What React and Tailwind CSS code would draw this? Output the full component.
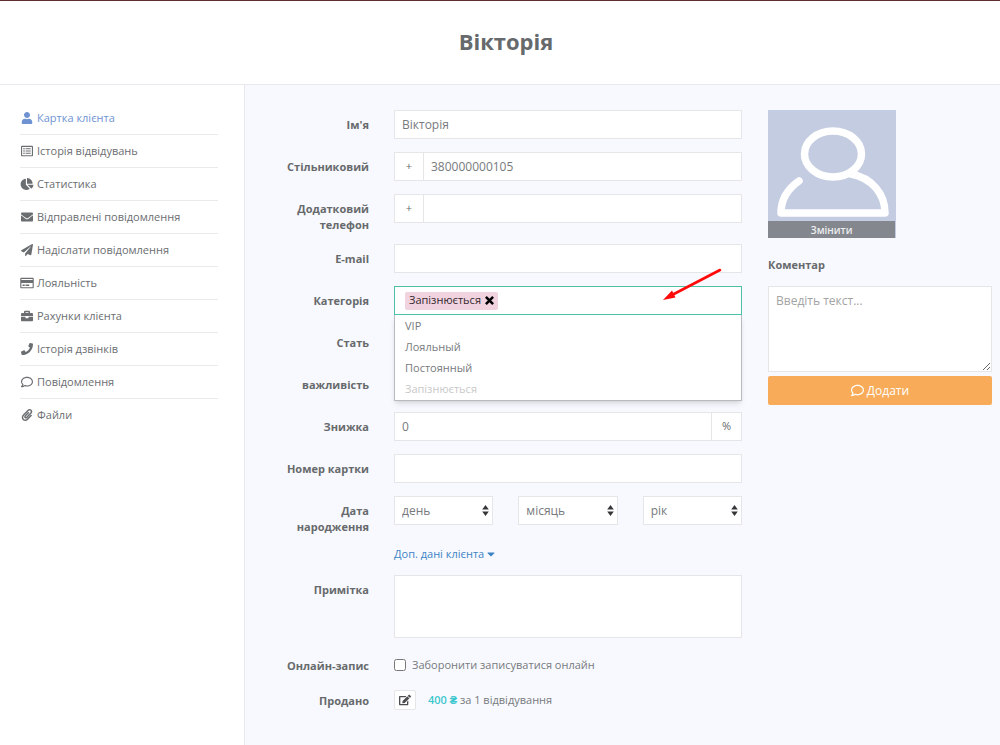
import React from "react";
import {
  FaUser,
  FaRegListAlt,
  FaChartPie,
  FaEnvelope,
  FaPaperPlane,
  FaRegCreditCard,
  FaBriefcase,
  FaPhone,
  FaRegComment,
  FaPaperclip,
  FaCaretDown,
  FaEdit,
} from "react-icons/fa";

const menu = [
  { label: "Картка клієнта", Icon: FaUser, active: true },
  { label: "Історія відвідувань", Icon: FaRegListAlt },
  { label: "Статистика", Icon: FaChartPie },
  { label: "Відправлені повідомлення", Icon: FaEnvelope },
  { label: "Надіслати повідомлення", Icon: FaPaperPlane },
  { label: "Лояльність", Icon: FaRegCreditCard },
  { label: "Рахунки клієнта", Icon: FaBriefcase },
  { label: "Історія дзвінків", Icon: FaPhone },
  { label: "Повідомлення", Icon: FaRegComment },
  { label: "Файли", Icon: FaPaperclip },
];

const box =
  "block h-[29px] w-full min-w-0 border border-[#e5e6e7] bg-white px-[7px] text-[12px] text-[#777a7d] outline-none";

function Sidebar() {
  return (
    <nav className="w-[245px] shrink-0 border-r border-[#e7e9ee] bg-white pt-[17px] pr-[26px] pl-5">
      <ul>
        {menu.map(({ label, Icon, active }) => (
          <li key={label} className="border-b border-[#e9eaeb] last:border-b-0">
            <a
              href="#"
              className={
                active
                  ? "flex h-8 items-center gap-[3px] text-[11px] text-[#6f93d2]"
                  : "flex h-8 items-center gap-[3px] text-[11px] text-[#6b6e71]"
              }
            >
              <Icon className="h-3 w-3.5 shrink-0" />
              {label}
            </a>
          </li>
        ))}
      </ul>
    </nav>
  );
}

function Row({ label, id, children }) {
  return (
    <div className="flex gap-[25px]">
      <label
        htmlFor={id}
        className="-mb-0.5 w-[94px] shrink-0 pt-[7px] text-right text-[11px] leading-4 font-bold text-[#676a6c]"
      >
        {label}
      </label>
      <div className="min-w-0 flex-1">{children}</div>
    </div>
  );
}

function PhoneInput({ id, value }) {
  return (
    <div className="flex">
      <span className="flex h-[29px] w-[29px] shrink-0 items-center justify-center border border-r-0 border-[#e5e6e7] bg-white text-[11px] text-[#676a6c]">
        +
      </span>
      <input id={id} type="tel" defaultValue={value} className={box} />
    </div>
  );
}

function DateSelect({ id, label }) {
  return (
    <div className="relative">
      <select id={id} aria-label={label} className={`${box} appearance-none`}>
        <option>{label}</option>
      </select>
      <svg
        viewBox="0 0 6 10"
        className="pointer-events-none absolute top-[9px] right-1 h-[11px] w-[7px]"
        fill="#343638"
      >
        <path d="M3 0 6 4H0zM3 10 0 6h6z" />
      </svg>
    </div>
  );
}

function Category() {
  return (
    <div className="relative">
      <div className="flex h-[29px] items-center border border-[#4fc0a8] bg-white px-2.5">
        <span className="flex h-[18px] items-center gap-1 rounded-xs bg-[#f1d3e0] px-1 text-[11px] text-[#33292e]">
          Запізнюється
          <button type="button" aria-label="Прибрати" className="flex">
            <svg viewBox="0 0 10 10" className="h-[9px] w-[9px]" stroke="#000" strokeWidth="2.8">
              <path d="M1 1l8 8M9 1L1 9" />
            </svg>
          </button>
        </span>
        <input id="category" className="h-full min-w-0 flex-1 outline-none" />
      </div>
      <ul
        role="listbox"
        aria-label="Категорія"
        className="absolute inset-x-0 top-[29px] z-10 border border-t-0 border-[#b9babd] bg-white text-[11px] text-[#777a7d] shadow-md"
      >
        <li role="option" className="h-[21px] px-2.5 leading-[21px]">VIP</li>
        <li role="option" className="h-[21px] px-2.5 leading-[21px]">Лояльный</li>
        <li role="option" className="h-[21px] px-2.5 leading-[21px]">Постоянный</li>
        <li role="option" aria-disabled="true" className="h-[22px] px-2.5 leading-[22px] text-[#c9c9c9]">
          Запізнюється
        </li>
      </ul>
      <svg
        viewBox="0 0 60 33"
        className="pointer-events-none absolute -top-[18px] right-5 z-20 h-[33px] w-[60px]"
      >
        <path d="M58 2 10 27" stroke="#fe0a0a" strokeWidth="2.6" strokeLinecap="round" />
        <path d="M1 32 10 22.500 13.500 29.500z" fill="#fe0a0a" />
      </svg>
    </div>
  );
}

function ClientForm() {
  return (
    <form className="flex min-w-0 flex-1 flex-col gap-[13px]">
      <Row label="Ім'я" id="name">
        <input id="name" defaultValue="Вікторія" className={box} />
      </Row>
      <Row label="Стільниковий" id="phone">
        <PhoneInput id="phone" value="380000000105" />
      </Row>
      <Row label="Додатковий телефон" id="phone2">
        <PhoneInput id="phone2" value="" />
      </Row>
      <Row label="E-mail" id="email">
        <input id="email" type="email" className={box} />
      </Row>
      <Row label="Категорія" id="category">
        <Category />
      </Row>
      <Row label="Стать" id="gender">
        <select id="gender" className={`${box} appearance-none`} />
      </Row>
      <Row label="важливість" id="importance">
        <select id="importance" className={`${box} appearance-none`} />
      </Row>
      <Row label="Знижка" id="discount">
        <div className="flex">
          <input id="discount" defaultValue="0" className={box} />
          <span className="flex h-[29px] w-[30px] shrink-0 items-center justify-center border border-l-0 border-[#e5e6e7] bg-white text-[11px] text-[#676a6c]">
            %
          </span>
        </div>
      </Row>
      <Row label="Номер картки" id="card">
        <input id="card" className={box} />
      </Row>
      <Row label="Дата народження" id="day">
        <div className="grid grid-cols-3 gap-[25px]">
          <DateSelect id="day" label="день" />
          <DateSelect id="month" label="місяць" />
          <DateSelect id="year" label="рік" />
        </div>
      </Row>
      <div className="flex pl-[119px]">
        <a href="#" className="flex items-center gap-0.5 text-[11px] leading-4 text-[#3c84c4]">
          Доп. дані клієнта
          <FaCaretDown className="h-3 w-2.5" />
        </a>
      </div>
      <Row label="Примітка" id="note">
        <textarea
          id="note"
          className="block h-[63px] w-full resize-none border border-[#e5e6e7] bg-white p-[7px] text-[12px] outline-none"
        />
      </Row>
      <Row label="Онлайн-запис" id="online">
        <label className="flex items-center gap-1.5 pt-[6px] text-[11px] leading-4 text-[#777a7d]">
          <input id="online" type="checkbox" className="h-3 w-3 shrink-0" />
          Заборонити записуватися онлайн
        </label>
      </Row>
      <Row label="Продано" id="edit-sales">
        <div className="flex items-center gap-3 pt-1 text-[11px] leading-5 text-[#777a7d]">
          <button
            id="edit-sales"
            type="button"
            aria-label="Редагувати"
            className="flex h-5 w-[22px] items-center justify-center rounded-xs border border-[#e5e6e7] bg-white text-[#4b4d50]"
          >
            <FaEdit className="h-3 w-3" />
          </button>
          <span>
            <span className="font-semibold text-[#3cc7cf]">400 ₴</span> за 1 відвідування
          </span>
        </div>
      </Row>
    </form>
  );
}

function Aside() {
  return (
    <aside className="w-[224px] shrink-0">
      <div className="relative h-32 w-32 bg-[#c4cce1]">
        <svg viewBox="0 0 128 128" className="h-32 w-32" fill="none" stroke="#fff" strokeWidth="7.500">
          <ellipse cx="65" cy="44" rx="28.500" ry="23" />
          <path
            d="M31 71C18 80 13 91 13 103H117C117 84 104 68 83 64"
            strokeLinecap="round"
            strokeLinejoin="round"
          />
        </svg>
        <button
          type="button"
          className="absolute bottom-0 left-0 h-[17px] w-[127px] bg-[#84878e] text-[10px] leading-4 font-semibold text-[#eceef0]"
        >
          Змінити
        </button>
      </div>
      <label htmlFor="comment" className="mt-[19px] block text-[11px] leading-4 font-bold text-[#676a6c]">
        Коментар
      </label>
      <textarea
        id="comment"
        placeholder="Введіть текст..."
        className="mt-[13px] block h-[86px] w-full border border-[#e5e6e7] bg-white px-[7px] py-[5px] text-[12px] outline-none placeholder:text-[#a3a3a3]"
      />
      <button
        type="button"
        className="mt-1 flex h-[29px] w-full items-center justify-center gap-[3px] rounded-xs bg-[#f8ac59] text-[12px] font-medium text-white"
      >
        <FaRegComment className="h-[13px] w-[13px]" />
        Додати
      </button>
    </aside>
  );
}

export default function App() {
  return (
    <div className="flex min-h-screen flex-col bg-white font-['Open_Sans',sans-serif]">
      <header className="flex h-[85px] items-center justify-center border-t border-b border-t-[#5e2e30] border-b-[#e7e9ee] pb-0.5 pl-3">
        <h1 className="text-[22px] font-bold text-[#676a6c]">Вікторія</h1>
      </header>
      <div className="flex flex-1">
        <Sidebar />
        <main className="flex min-w-0 flex-1 items-start gap-[26px] bg-[#f8f9fe] py-[25px] pr-2 pl-[30px]">
          <ClientForm />
          <Aside />
        </main>
      </div>
    </div>
  );
}
